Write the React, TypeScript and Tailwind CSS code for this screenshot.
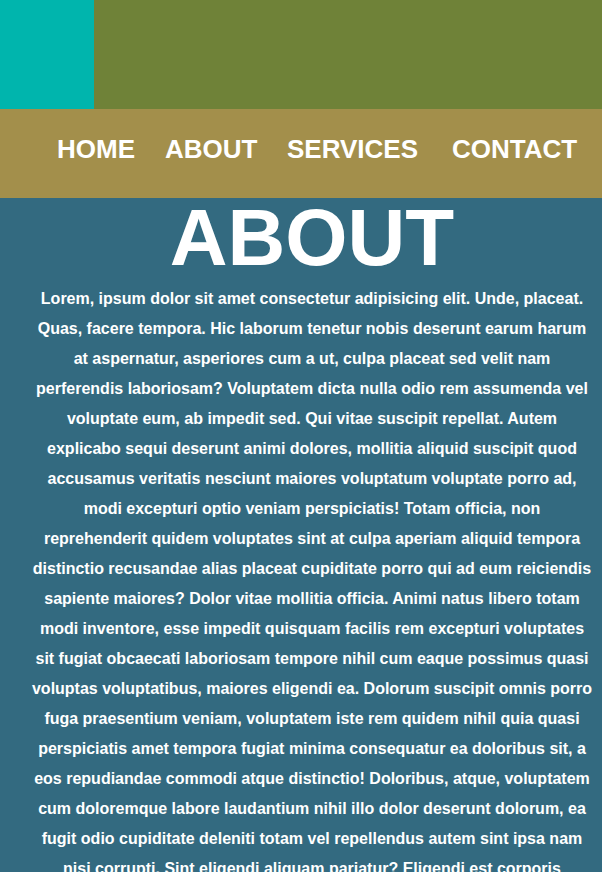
import React from "react";

const links = [
  { label: "HOME", w: "w-[108px]" },
  { label: "ABOUT", w: "w-[122px]" },
  { label: "SERVICES", w: "w-[165px]" },
  { label: "CONTACT", w: "" },
];

const text =
  "Lorem, ipsum dolor sit amet consectetur adipisicing elit. Unde, placeat. Quas, facere tempora. Hic laborum tenetur nobis deserunt earum harum at aspernatur, asperiores cum a ut, culpa placeat sed velit nam perferendis laboriosam? Voluptatem dicta nulla odio rem assumenda vel voluptate eum, ab impedit sed. Qui vitae suscipit repellat. Autem explicabo sequi deserunt animi dolores, mollitia aliquid suscipit quod accusamus veritatis nesciunt maiores voluptatum voluptate porro ad, modi excepturi optio veniam perspiciatis! Totam officia, non reprehenderit quidem voluptates sint at culpa aperiam aliquid tempora distinctio recusandae alias placeat cupiditate porro qui ad eum reiciendis sapiente maiores? Dolor vitae mollitia officia. Animi natus libero totam modi inventore, esse impedit quisquam facilis rem excepturi voluptates sit fugiat obcaecati laboriosam tempore nihil cum eaque possimus quasi voluptas voluptatibus, maiores eligendi ea. Dolorum suscipit omnis porro fuga praesentium veniam, voluptatem iste rem quidem nihil quia quasi perspiciatis amet tempora fugiat minima consequatur ea doloribus sit, a eos repudiandae commodi atque distinctio! Doloribus, atque, voluptatem cum doloremque labore laudantium nihil illo dolor deserunt dolorum, ea fugit odio cupiditate deleniti totam vel repellendus autem sint ipsa nam nisi corrupti. Sint eligendi aliquam pariatur? Eligendi est corporis quibusdam, voluptates nostrum ipsum dolores accusantium, tempore.";

export default function App() {
  return (
    <div className="min-h-screen bg-[#336a80] font-['Liberation_Sans',Arial,sans-serif] text-white">
      {/* top strip */}
      <div className="flex h-[109px]">
        <div className="w-[94px] bg-[#00b5ad]" />
        <div className="flex-1 bg-[#6f8238]" />
      </div>

      {/* nav */}
      <nav className="flex h-[89px] items-center bg-[#a38f4b] pl-[57px] pb-[8px]">
        {links.map((l) => (
          <a key={l.label} href="#" className={`${l.w} text-[26px] font-bold text-white`}>
            {l.label}
          </a>
        ))}
      </nav>

      {/* about */}
      <section className="pl-[31px] pr-[9px] text-center">
        <h1 className="text-[80px] font-bold leading-none">ABOUT</h1>
        <p className="mt-[6px] text-[16px] font-bold leading-[30px]">{text}</p>
      </section>
    </div>
  );
}
